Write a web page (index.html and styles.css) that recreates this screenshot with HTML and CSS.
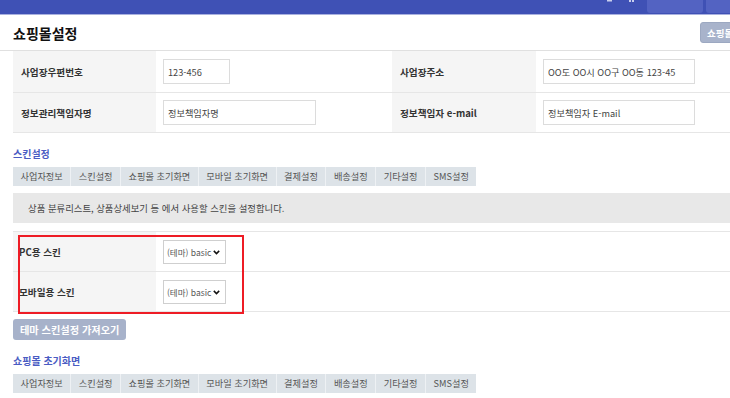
FILE: index.html
```html
<!DOCTYPE html>
<html lang="ko">
<head>
<meta charset="utf-8">
<title>쇼핑몰설정</title>
<link rel="stylesheet" href="styles.css">
</head>
<body>
<div class="page">
  <header class="topbar">
    <svg class="marks" width="28" height="3" viewBox="0 0 28 3">
      <rect x="0" y="0" width="5" height="1.5" fill="#c9cfee"/>
      <rect x="22" y="0" width="2" height="2" fill="#c9cfee"/>
      <rect x="25" y="0" width="2" height="2" fill="#c9cfee"/>
    </svg>
    <span class="topbtn topbtn-a"></span>
    <span class="topbtn topbtn-b"></span>
  </header>

  <div class="titlebar">
    <h1>쇼핑몰설정</h1>
    <button class="title-btn" type="button">쇼핑몰설정 저장</button>
  </div>

  <main class="content">
    <div class="form-grid four">
      <div class="lbl">사업장우편번호</div>
      <div class="val"><input class="inp w-s" type="text" value="123-456"></div>
      <div class="lbl">사업장주소</div>
      <div class="val"><input class="inp w-l" type="text" value="OO도 OO시 OO구 OO동 123-45"></div>

      <div class="lbl">정보관리책임자명</div>
      <div class="val"><input class="inp w-m" type="text" value="정보책임자명"></div>
      <div class="lbl">정보책임자 e-mail</div>
      <div class="val"><input class="inp w-l" type="text" value="정보책임자 E-mail"></div>
    </div>

    <section class="section">
      <h2>스킨설정</h2>
      <nav class="tabs">
        <span class="tab">사업자정보</span>
        <span class="tab">스킨설정</span>
        <span class="tab">쇼핑몰 초기화면</span>
        <span class="tab">모바일 초기화면</span>
        <span class="tab">결제설정</span>
        <span class="tab">배송설정</span>
        <span class="tab">기타설정</span>
        <span class="tab">SMS설정</span>
      </nav>
      <div class="info">상품 분류리스트, 상품상세보기 등 에서 사용할 스킨을 설정합니다.</div>

      <div class="skin-wrap">
        <div class="form-grid two">
          <div class="lbl lbl-tight">PC용 스킨</div>
          <div class="val">
            <span class="select">
              <select><option>(테마) basic</option></select>
              <svg class="chev" width="7" height="5" viewBox="0 0 7 5"><path d="M0.8 0.9 L3.5 3.6 L6.2 0.9" fill="none" stroke="#111" stroke-width="1.5"/></svg>
            </span>
          </div>
          <div class="lbl lbl-tight">모바일용 스킨</div>
          <div class="val">
            <span class="select">
              <select><option>(테마) basic</option></select>
              <svg class="chev" width="7" height="5" viewBox="0 0 7 5"><path d="M0.8 0.9 L3.5 3.6 L6.2 0.9" fill="none" stroke="#111" stroke-width="1.5"/></svg>
            </span>
          </div>
        </div>
        <div class="highlight"></div>
      </div>

      <button class="btn" type="button">테마 스킨설정 가져오기</button>
    </section>

    <section class="section">
      <h2>쇼핑몰 초기화면</h2>
      <nav class="tabs">
        <span class="tab">사업자정보</span>
        <span class="tab">스킨설정</span>
        <span class="tab">쇼핑몰 초기화면</span>
        <span class="tab">모바일 초기화면</span>
        <span class="tab">결제설정</span>
        <span class="tab">배송설정</span>
        <span class="tab">기타설정</span>
        <span class="tab">SMS설정</span>
      </nav>
    </section>
  </main>
</div>
</body>
</html>
```

FILE: styles.css
```css
html {
  overflow: hidden;
}

body {
  margin: 0;
  background: #fff;
  color: #333;
  font-family: "Noto Sans CJK KR", sans-serif;
}

.page {
  width: 800px;
}

/* top bar */
.topbar {
  height: 14px;
  background: #3f51b5;
  border-bottom: 1px solid #a9b1df;
  display: flex;
  align-items: flex-start;
  justify-content: flex-end;
  padding-right: 34px;
}

.marks {
  display: block;
  flex: none;
}

.topbtn {
  display: block;
  flex: none;
  height: 13px;
  background: #5363c2;
  border-radius: 0 0 3px 3px;
}

.topbtn-a {
  width: 56px;
  margin-left: 12px;
}

.topbtn-b {
  width: 60px;
  margin-left: 3px;
}

/* title bar */
.titlebar {
  height: 35px;
  border-bottom: 1px solid #e0e0e0;
  display: flex;
  align-items: center;
  justify-content: space-between;
  padding: 0 12px 0 13px;
}

.titlebar h1 {
  margin: 0;
  font-size: 14px;
  font-weight: 700;
  line-height: 16px;
  color: #111;
}

.title-btn {
  width: 88px;
  height: 21px;
  padding: 0 6px;
  text-align: left;
  background: #a8b3cb;
  border: 1px solid #9ca8c1;
  border-radius: 3px;
  color: #fff;
  font-family: inherit;
  font-size: 9.5px;
  font-weight: 700;
}

/* content */
.content {
  padding-left: 13px;
}

.form-grid {
  display: grid;
}

.form-grid.four {
  grid-template-columns: 143px 236px 144px 1fr;
  grid-template-rows: 42px 40px;
}

.form-grid.two {
  grid-template-columns: 143px 1fr;
  grid-auto-rows: 40px;
  border-top: 1px solid #e6e6e6;
}

.lbl,
.val {
  display: flex;
  align-items: center;
  border-bottom: 1px solid #e6e6e6;
  box-sizing: border-box;
}

.lbl {
  background: #f5f5f5;
  padding-left: 8px;
  font-size: 9.6px;
  font-weight: 700;
  color: #333;
}

.lbl-tight {
  padding-left: 6px;
}

.val {
  padding-left: 7px;
}

.inp {
  box-sizing: border-box;
  height: 25px;
  border: 1px solid #dcdcdc;
  padding: 0 4px;
  font-family: inherit;
  font-size: 9.2px;
  color: #444;
  background: #fff;
  outline: none;
}

.w-s { width: 67px; }
.w-m { width: 153px; }
.w-l { width: 152px; }

/* sections */
.section h2 {
  margin: 15px 0 7px;
  font-size: 10px;
  line-height: 12px;
  font-weight: 700;
  color: #4a5cc3;
}

.tabs {
  display: flex;
  width: max-content;
  height: 19px;
  background: #dde3e8;
}

.tab {
  padding: 0 7.5px;
  font-size: 9.2px;
  line-height: 19px;
  color: #555;
  border-left: 1px solid #eef1f4;
}

.tab:first-child {
  border-left: none;
}

.info {
  margin-top: 7px;
  height: 30px;
  padding-left: 15px;
  background: #e8e8e8;
  font-size: 9.4px;
  line-height: 30px;
  color: #444;
}

.skin-wrap {
  position: relative;
  margin-top: 8px;
}

.select {
  position: relative;
  display: inline-flex;
  width: 63px;
  height: 24px;
}

.select select {
  appearance: none;
  -webkit-appearance: none;
  box-sizing: border-box;
  width: 100%;
  height: 100%;
  border: 1px solid #cfcfcf;
  border-radius: 0;
  padding: 0 0 0 3px;
  background: #fff;
  font-family: inherit;
  font-size: 8.5px;
  color: #555;
  outline: none;
}

.chev {
  position: absolute;
  right: 6px;
  top: 10px;
  pointer-events: none;
}

.highlight {
  position: absolute;
  left: 5px;
  top: 4px;
  width: 226px;
  height: 79px;
  box-sizing: border-box;
  border: 2px solid #ee1c25;
  pointer-events: none;
}

.btn {
  display: block;
  margin-top: 7px;
  height: 21px;
  padding: 0 7px;
  background: #a7b2ca;
  border: none;
  border-radius: 3px;
  color: #fff;
  font-family: inherit;
  font-size: 10.2px;
  font-weight: 700;
}
```
